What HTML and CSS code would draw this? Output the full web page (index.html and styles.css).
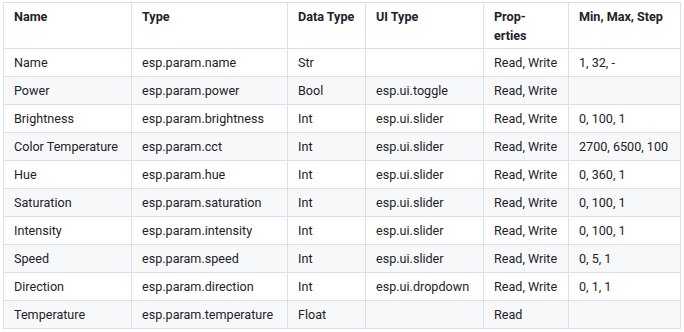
FILE: index.html
```html
<!DOCTYPE html>
<html lang="en">
<head>
  <meta charset="UTF-8" />
  <title>Standard Parameters</title>
  <link rel="stylesheet" href="styles.css">
</head>
<body>
  <table class="param-table">
    <colgroup>
      <col class="col-name">
      <col class="col-type">
      <col class="col-data">
      <col class="col-ui">
      <col class="col-props">
      <col class="col-bounds">
    </colgroup>
    <thead>
      <tr>
        <th>Name</th>
        <th>Type</th>
        <th>Data Type</th>
        <th>UI Type</th>
        <th>Prop-<br>erties</th>
        <th>Min, Max, Step</th>
      </tr>
    </thead>
    <tbody>
      <tr><td>Name</td><td>esp.param.name</td><td>Str</td><td></td><td>Read, Write</td><td>1, 32, -</td></tr>
      <tr><td>Power</td><td>esp.param.power</td><td>Bool</td><td>esp.ui.toggle</td><td>Read, Write</td><td></td></tr>
      <tr><td>Brightness</td><td>esp.param.brightness</td><td>Int</td><td>esp.ui.slider</td><td>Read, Write</td><td>0, 100, 1</td></tr>
      <tr><td>Color Temperature</td><td>esp.param.cct</td><td>Int</td><td>esp.ui.slider</td><td>Read, Write</td><td>2700, 6500, 100</td></tr>
      <tr><td>Hue</td><td>esp.param.hue</td><td>Int</td><td>esp.ui.slider</td><td>Read, Write</td><td>0, 360, 1</td></tr>
      <tr><td>Saturation</td><td>esp.param.saturation</td><td>Int</td><td>esp.ui.slider</td><td>Read, Write</td><td>0, 100, 1</td></tr>
      <tr><td>Intensity</td><td>esp.param.intensity</td><td>Int</td><td>esp.ui.slider</td><td>Read, Write</td><td>0, 100, 1</td></tr>
      <tr><td>Speed</td><td>esp.param.speed</td><td>Int</td><td>esp.ui.slider</td><td>Read, Write</td><td>0, 5, 1</td></tr>
      <tr><td>Direction</td><td>esp.param.direction</td><td>Int</td><td>esp.ui.dropdown</td><td>Read, Write</td><td>0, 1, 1</td></tr>
      <tr><td>Temperature</td><td>esp.param.temperature</td><td>Float</td><td></td><td>Read</td><td></td></tr>
    </tbody>
  </table>
</body>
</html>
```

FILE: styles.css
```css
/* General reset */
* {
  box-sizing: border-box;
}

body {
  margin: 2px 3px;
  font-family: Roboto, "Liberation Sans", Arial, sans-serif;
  font-size: 12.6px;
  color: #1f2328;
  background: #fff;
}

/* Table styling */
.param-table {
  border-collapse: collapse;
  table-layout: fixed;
  width: 677px;
}

.col-name { width: 128px; }
.col-type { width: 156px; }
.col-data { width: 78px; }
.col-ui { width: 118px; }
.col-props { width: 85px; }
.col-bounds { width: 112px; }

.param-table th,
.param-table td {
  border: 1px solid #dcdfe3;
  text-align: left;
  white-space: nowrap;
}

.param-table th {
  padding: 4px 10px 3px;
  line-height: 19px;
  font-weight: 700;
  vertical-align: top;
}

.param-table td {
  padding: 4px 10px;
  line-height: 19px;
}

.param-table tbody tr:nth-child(even) {
  background-color: #f6f8fa;
}
```
